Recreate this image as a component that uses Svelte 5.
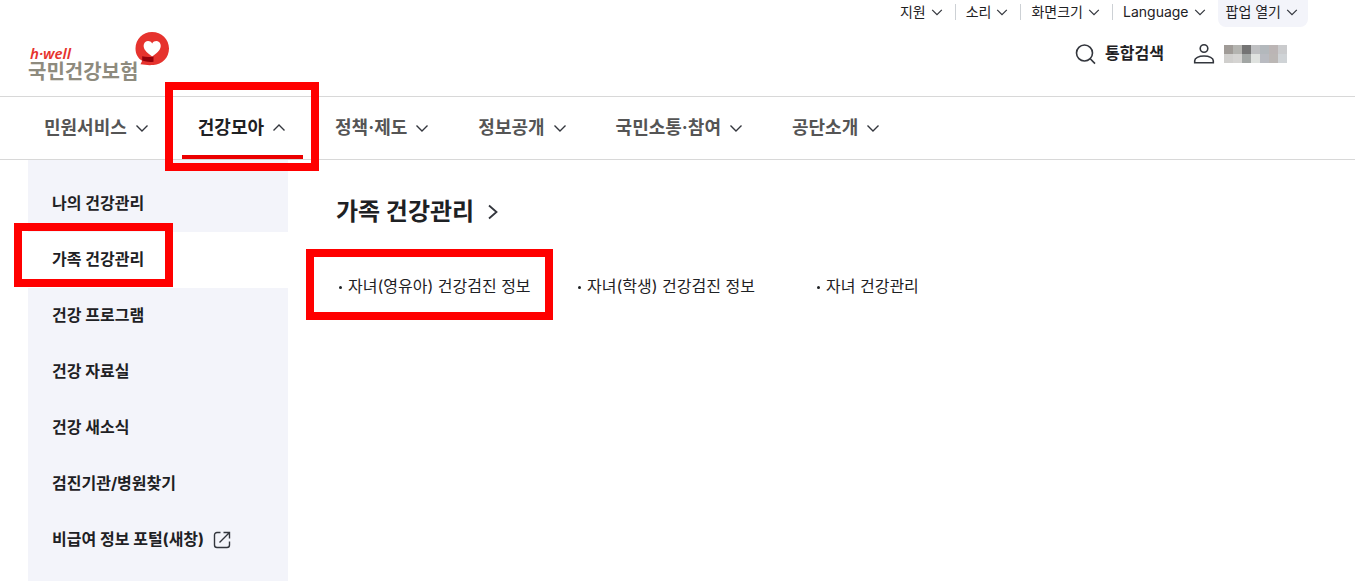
<script lang="ts">
  type Menu = { label: string; marked?: boolean; external?: boolean };

  const utilities: string[] = ['지원', '소리', '화면크기', 'Language'];

  const mainMenus: string[] = ['민원서비스', '건강모아', '정책·제도', '정보공개', '국민소통·참여', '공단소개'];

  const sideMenus: Menu[] = [
    { label: '나의 건강관리' },
    { label: '가족 건강관리', marked: true },
    { label: '건강 프로그램' },
    { label: '건강 자료실' },
    { label: '건강 새소식' },
    { label: '검진기관/병원찾기' },
    { label: '비급여 정보 포털(새창)', external: true },
  ];

  const subLinks: Menu[] = [
    { label: '자녀(영유아) 건강검진 정보', marked: true },
    { label: '자녀(학생) 건강검진 정보' },
    { label: '자녀 건강관리' },
  ];

  // 가려진 사용자 이름
  const mosaic: string[] = [
    '#a09b97', '#b4b4b0', '#747474', '#bfc0c2', '#b3b8bc', '#bbb5b5', '#cacbcd',
    '#d0cfcd', '#d5d4d2', '#a2a6a4', '#dfe2df', '#b9bbc1', '#bbb7b5', '#cfd3d6',
  ];

  let openMenu = $state('건강모아');
  let activeSide = $state('가족 건강관리');

  function toggleMenu(label: string) {
    openMenu = openMenu === label ? '' : label;
  }
</script>

{#snippet chevron(up: boolean)}
  <svg class="chevron" viewBox="0 0 16 16" aria-hidden="true">
    <path d={up ? 'M2.500 10.500 8 5l5.500 5.500' : 'M2.500 5.500 8 11l5.500-5.500'} />
  </svg>
{/snippet}

<div class="page">
  <header class="header">
    <div class="utility">
      <ul class="utility-list">
        {#each utilities as item}
          <li>
            <button type="button" class="utility-btn">{item}{@render chevron(false)}</button>
          </li>
        {/each}
      </ul>
      <button type="button" class="utility-btn popup-btn">팝업 열기{@render chevron(false)}</button>
    </div>

    <div class="brand">
      <a class="logo" href="#home">
        <span class="logo-text">
          <span class="logo-en">h·well</span>
          <span class="logo-ko">국민건강보험</span>
        </span>
        <svg class="logo-mark" viewBox="0 0 34 34" aria-hidden="true">
          <path
            fill="#e6332e"
            d="M17 0C26.500 0 34 7.300 34 16.500S27 32.500 18.500 33C14 33.400 9.500 33 5.500 32.300L7.200 28.800C3 26.500.5 22 .5 16.500.5 7.300 7.700 0 17 0Z"
          />
          <path fill="#fff" d="M17.200 11.400C18.700 8.800 22 8.300 24 10c2.300 2 2.200 5.500.2 8.200-1.700 2.300-4.400 4-7 6.200-2.600-2.200-5.400-3.900-7-6.200-2-2.700-2.100-6.200.1-8.200 2-1.700 5.300-1.200 6.900 1.400Z" />
          <path fill="#94000a" d="M7.200 24.200c3.800 1 7.600 1 11.300.2v5.400c-4.500.5-8-.1-11.300-1.300Z" />
        </svg>
      </a>

      <div class="brand-tools">
        <button type="button" class="tool search">
          <svg viewBox="0 0 24 24" aria-hidden="true">
            <circle cx="11.500" cy="11" r="8" />
            <path d="m17.200 16.800 4.800 4.800" />
          </svg>
          <span class="tool-label">통합검색</span>
        </button>
        <button type="button" class="tool user" aria-label="사용자">
          <svg viewBox="0 0 24 24" aria-hidden="true">
            <circle cx="12" cy="6.500" r="3.800" />
            <path d="M2.700 20.800v-2c0-2.800 4-4.800 9.300-4.800s9.300 2 9.300 4.800v2Z" />
          </svg>
          <span class="mosaic">
            {#each mosaic as color}
              <i style:background={color}></i>
            {/each}
          </span>
        </button>
      </div>
    </div>

    <nav class="main-nav">
      {#each mainMenus as menu}
        <button
          type="button"
          class="nav-btn"
          class:open={openMenu === menu}
          aria-expanded={openMenu === menu}
          onclick={() => toggleMenu(menu)}
        >
          {menu}{@render chevron(openMenu === menu)}
          {#if menu === '건강모아'}
            <span class="mark nav-mark"></span>
          {/if}
        </button>
      {/each}
    </nav>
  </header>

  <div class="mega">
    <ul class="side">
      {#each sideMenus as item}
        <li>
          <a
            href="#side"
            class="side-link"
            class:active={activeSide === item.label}
            onclick={() => (activeSide = item.label)}
          >
            {item.label}
            {#if item.external}
              <svg class="external" viewBox="0 0 18 18" aria-hidden="true">
                <path d="M7.500 1.500H4A2.500 2.500 0 0 0 1.500 4v10A2.500 2.500 0 0 0 4 16.500h10a2.500 2.500 0 0 0 2.500-2.500v-3.500M10.500 1.500h6v6M16.500 1.500 6.500 11.500" />
              </svg>
            {/if}
            {#if item.marked}
              <span class="mark side-mark"></span>
            {/if}
          </a>
        </li>
      {/each}
    </ul>

    <main class="content">
      <h2>
        <a href="#family">
          가족 건강관리
          <svg class="title-arrow" viewBox="0 0 20 20" aria-hidden="true">
            <path d="m6 3.500 7.500 6.500L6 16.500" />
          </svg>
        </a>
      </h2>
      <ul class="sub-links">
        {#each subLinks as link}
          <li>
            <a href="#sub">{link.label}</a>
            {#if link.marked}
              <span class="mark link-mark"></span>
            {/if}
          </li>
        {/each}
      </ul>
    </main>
  </div>
</div>

<style>
  :global(body) {
    margin: 0;
    background: #fff;
  }

  .page {
    display: flex;
    flex-direction: column;
    min-height: 100vh;
    color: #1e2124;
    font-family: Inter, 'Noto Sans CJK KR', sans-serif;
    font-size: 16px;
  }

  button {
    padding: 0;
    border: 0;
    background: none;
    color: inherit;
    font: inherit;
    cursor: pointer;
  }

  a {
    color: inherit;
    text-decoration: none;
  }

  ul {
    margin: 0;
    padding: 0;
    list-style: none;
  }

  svg {
    flex-shrink: 0;
    fill: none;
    stroke: #33363d;
  }

  .chevron {
    width: 16px;
    height: 16px;
    stroke-width: 1.4;
  }

  .utility {
    display: flex;
    justify-content: flex-end;
    padding: 0 47px 0 28px;
  }

  .utility-list {
    display: flex;
  }

  .utility-list li {
    display: flex;
    align-items: center;
    height: 24px;
  }

  .utility-list li + li::before {
    content: '';
    width: 1px;
    height: 16px;
    background: #cdd1d5;
  }

  .utility-btn {
    display: flex;
    align-items: center;
    gap: 4px;
    height: 24px;
    padding: 0 11px 0 10px;
    font-size: 14px;
    line-height: 24px;
  }

  .utility-btn .chevron {
    width: 14px;
    height: 14px;
  }

  .popup-btn {
    height: 27px;
    padding: 0 9px 3px 8px;
    border-radius: 0 0 8px 8px;
    background: #f3f4fa;
  }

  .brand {
    display: flex;
    align-items: flex-start;
    justify-content: space-between;
    height: 69px;
    padding: 0 68px 0 28px;
  }

  .logo {
    display: flex;
    padding-top: 5px;
  }

  .logo-text {
    display: flex;
    flex-direction: column;
    padding-top: 12px;
  }

  .logo-en {
    padding-left: 2px;
    color: #e6332e;
    font-family: 'Noto Sans', sans-serif;
    font-size: 15px;
    font-style: italic;
    font-weight: 600;
    line-height: 18px;
  }

  .logo-ko {
    color: #8e8b7e;
    font-size: 20px;
    font-weight: 700;
    line-height: 20px;
  }

  .logo-mark {
    width: 34px;
    height: 34px;
    margin-left: -3px;
    stroke: none;
  }

  .brand-tools {
    display: flex;
    gap: 28px;
    padding-top: 15px;
  }

  .tool {
    display: flex;
    align-items: center;
    gap: 8px;
    height: 24px;
    font-weight: 700;
  }

  .tool svg {
    width: 24px;
    height: 24px;
    stroke-width: 1.6;
  }

  .tool-label {
    padding-bottom: 4px;
  }

  .mosaic {
    display: grid;
    grid-template-columns: repeat(7, 9px);
    grid-auto-rows: 9px;
  }

  .main-nav {
    display: flex;
    gap: 16px;
    padding: 0 28px;
    border-top: 1px solid #d8d8d8;
    border-bottom: 1px solid #d8d8d8;
  }

  .nav-btn {
    position: relative;
    display: flex;
    align-items: center;
    gap: 7px;
    height: 62px;
    padding: 0 16px 4px;
    color: #555;
    font-size: 18px;
    font-weight: 700;
    white-space: nowrap;
  }

  .nav-btn .chevron,
  .external {
    margin-top: 4px;
  }

  .nav-btn.open {
    color: #1e2124;
    box-shadow: inset 0 -4px #eb0000;
  }

  .mega {
    display: flex;
    flex: 1;
    padding-left: 28px;
  }

  .side {
    width: 260px;
    padding: 16px 0 8px;
    box-sizing: border-box;
    flex-shrink: 0;
    background: #f3f4fa;
  }

  .side-link {
    position: relative;
    display: flex;
    align-items: center;
    gap: 9px;
    height: 56px;
    padding: 0 24px 4px;
    box-sizing: border-box;
    font-weight: 700;
  }

  .side-link.active {
    background: #fff;
  }

  .external {
    width: 18px;
    height: 18px;
    stroke-width: 1.4;
  }

  .content {
    flex: 1;
    padding: 32px 28px 0 48px;
  }

  h2 {
    margin: 0;
    font-size: 24px;
    font-weight: 700;
    line-height: 40px;
  }

  h2 a {
    display: inline-flex;
    align-items: center;
    gap: 9px;
  }

  .title-arrow {
    width: 20px;
    height: 20px;
    stroke-width: 1.8;
  }

  .sub-links {
    display: grid;
    grid-template-columns: repeat(auto-fill, 239px);
    margin-top: 40px;
  }

  .sub-links li {
    position: relative;
    display: flex;
    align-items: center;
    gap: 6px;
    padding-left: 3px;
    line-height: 28px;
    white-space: nowrap;
  }

  .sub-links li::before {
    content: '';
    width: 3px;
    height: 3px;
    margin-top: 3px;
    border-radius: 50%;
    background: #1e2124;
  }

  /* 빨간 안내 테두리 */
  .mark {
    position: absolute;
    z-index: 1;
    border: 8px solid #f00;
    pointer-events: none;
  }

  .nav-mark {
    inset: -15px -16px -12px -17px;
  }

  .side-mark {
    inset: -9px 115px 1px -14px;
  }

  .link-mark {
    inset: -23px 22px -20px -30px;
  }
</style>
